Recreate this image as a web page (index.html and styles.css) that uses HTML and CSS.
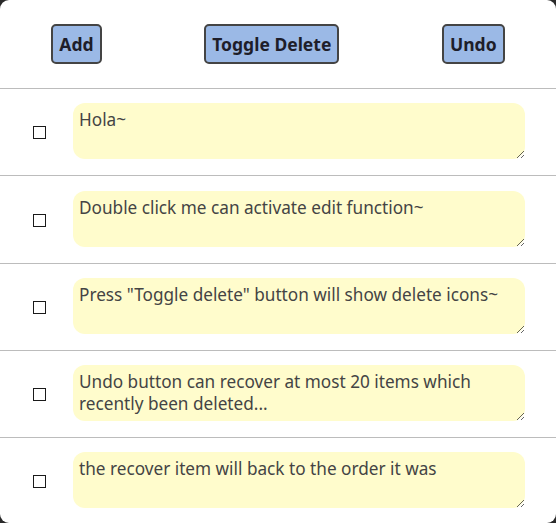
FILE: index.html
```html
<!DOCTYPE html>
<html>
<head>
<meta charset="utf-8">
<link rel="stylesheet" href="styles.css">
</head>
<body>
<div class="app">
  <div class="toolbar">
    <button class="btn">Add</button>
    <button class="btn">Toggle Delete</button>
    <button class="btn">Undo</button>
  </div>
  <ul class="list">
    <li class="item"><input type="checkbox" class="check"><textarea class="note">Hola~</textarea></li>
    <li class="item"><input type="checkbox" class="check"><textarea class="note">Double click me can activate edit function~</textarea></li>
    <li class="item"><input type="checkbox" class="check"><textarea class="note">Press "Toggle delete" button will show delete icons~</textarea></li>
    <li class="item"><input type="checkbox" class="check"><textarea class="note">Undo button can recover at most 20 items which recently been deleted...</textarea></li>
    <li class="item"><input type="checkbox" class="check"><textarea class="note">the recover item will back to the order it was</textarea></li>
  </ul>
</div>
</body>
</html>
```
FILE: styles.css
```css
html, body {
  margin: 0;
  padding: 0;
  background: #2a2a2a;
  height: 100%;
}
.app {
  background: #ffffff;
  border-radius: 9px;
  height: 523px;
  overflow: hidden;
  font-family: "Noto Sans", "Open Sans", sans-serif;
}
.toolbar {
  display: flex;
  justify-content: space-around;
  align-items: center;
  height: 88px;
  box-sizing: border-box;
  padding-top: 0;
}
.btn {
  font-family: "Noto Sans", sans-serif;
  font-weight: bold;
  font-size: 17.5px;
  color: #1e1e2a;
  background: #9bb9e6;
  border: 2px solid #444;
  border-radius: 5px;
  height: 40px;
  padding: 0 6px;
  margin: 0;
}
.list {
  list-style: none;
  margin: 0;
  padding: 0;
}
.item {
  display: flex;
  align-items: center;
  border-top: 1.5px solid #bcbcbc;
  padding: 14.25px 31px 16px 33px;
  gap: 27px;
}
.check {
  appearance: none;
  -webkit-appearance: none;
  width: 13px;
  height: 13px;
  margin: 3px 0 0 0;
  flex: none;
  border: 1.5px solid #1a1a1a;
  border-radius: 0;
  background: #fff;
  box-sizing: border-box;
}
.note {
  flex: 1;
  height: 56px;
  box-sizing: border-box;
  background: #fffccc;
  border: none;
  border-radius: 12px;
  padding: 6px 6px 5px;
  font-family: "Noto Sans", sans-serif;
  font-size: 17.2px;
  line-height: 22px;
  color: #444;
  resize: vertical;
  outline: none;
}
```
